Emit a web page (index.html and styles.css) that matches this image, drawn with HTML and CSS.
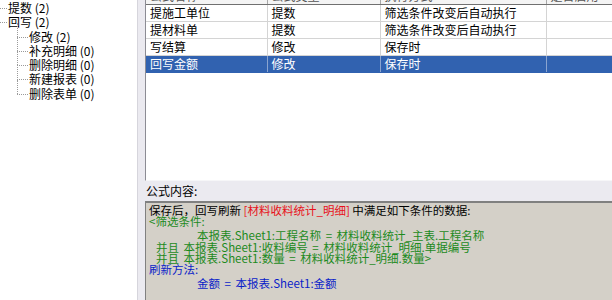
FILE: index.html
```html
<!DOCTYPE html>
<html lang="zh-CN">
<head>
  <meta charset="UTF-8">
  <title>回写公式</title>
  <link rel="stylesheet" href="styles.css">
</head>
<body>
  <div class="tree">
    <div class="node top">提数 (2)</div>
    <div class="node top">回写 (2)</div>
    <div class="children">
      <div class="node child">修改 (2)</div>
      <div class="node child">补充明细 (0)</div>
      <div class="node child">删除明细 (0)</div>
      <div class="node child">新建报表 (0)</div>
      <div class="node child last">删除表单 (0)</div>
    </div>
  </div>

  <div class="splitter"></div>

  <div class="main">
    <div class="list">
      <table class="grid">
        <colgroup>
          <col class="c1"><col class="c2"><col class="c3"><col class="c4">
        </colgroup>
        <thead>
          <tr><th>公式名称</th><th>公式类型</th><th>执行方式</th><th>是否启用</th></tr>
        </thead>
        <tbody>
          <tr><td>提施工单位</td><td>提数</td><td>筛选条件改变后自动执行</td><td></td></tr>
          <tr><td>提材料单</td><td>提数</td><td>筛选条件改变后自动执行</td><td></td></tr>
          <tr><td>写结算</td><td>修改</td><td>保存时</td><td></td></tr>
          <tr class="selected"><td>回写金额</td><td>修改</td><td>保存时</td><td></td></tr>
        </tbody>
      </table>
    </div>

    <div class="label">公式内容:</div>

    <div class="formula">
      <div class="line">保存后，回写刷新 <span class="red">[材料收料统计_明细]</span> 中满足如下条件的数据:</div>
      <div class="line green">&lt;筛选条件:</div>
      <div class="line green indent gap">本报表.Sheet1:工程名称 = 材料收料统计_主表.工程名称</div>
      <div class="line green sub">并且 本报表.Sheet1:收料编号 = 材料收料统计_明细.单据编号</div>
      <div class="line green sub">并且 本报表.Sheet1:数量 = 材料收料统计_明细.数量&gt;</div>
      <div class="line blue">刷新方法:</div>
      <div class="line blue indent gap">金额 = 本报表.Sheet1:金额</div>
    </div>
  </div>
</body>
</html>
```

FILE: styles.css
```css
html, body { margin: 0; padding: 0; }
body { width: 612px; height: 300px; overflow: hidden; display: flex; font-family: "Noto Sans CJK SC", sans-serif; font-size: 12px; color: #000; background: #fff; }

/* tree on the left */
.tree { width: 137px; flex: none; background: #fff; padding-top: 1px; }
.node { position: relative; height: 14.3px; line-height: 14.3px; white-space: nowrap; }
.node.top { padding-left: 8px; }
.node.top::before { content: ""; position: absolute; left: 0; top: 7px; width: 7px; border-top: 1px dotted #9a9a9a; }
.children { padding-left: 29px; }
.node.child::before { content: ""; position: absolute; left: -12px; top: 7px; width: 11px; border-top: 1px dotted #9a9a9a; }
.node.child::after { content: ""; position: absolute; left: -12px; top: -7px; height: 14.3px; border-left: 1px dotted #9a9a9a; }

.splitter { width: 7px; flex: none; background: #ebeaf0; border-left: 1px solid #d6d5dc; }

/* right side */
.main { flex: 1; display: flex; flex-direction: column; min-width: 0; background: #ebeaf0; }
.list { height: 180px; flex: none; overflow: hidden; background: #fff; border-left: 1px solid #8c8c94; border-bottom: 1px solid #f6f6f8; }
.grid { border-collapse: collapse; table-layout: fixed; width: 520px; margin-top: -13px; }
.grid col.c1 { width: 121px; }
.grid col.c2 { width: 113px; }
.grid col.c3 { width: 166px; }
.grid col.c4 { width: 120px; }
.grid th { height: 16px; font-weight: normal; text-align: left; padding: 0 4px; color: #555; background: #f4f4f4; border-right: 1px solid #a8a8a8; border-bottom: 1px solid #707070; white-space: nowrap; overflow: hidden; }
.grid td { height: 16px; line-height: 16px; padding: 0 4px; border-right: 1px solid #d4d4d4; border-bottom: 1px solid #d4d4d4; white-space: nowrap; overflow: hidden; }
.grid tr.selected td { background: #3162b0; color: #fff; border-right-color: #8aa4d0; border-bottom-color: #3162b0; }

.label { height: 20px; line-height: 20px; padding-left: 1px; flex: none; }

.formula { flex: 1; background: #d4d0c8; border-top: 2px solid #808080; border-left: 1px solid #808080; padding: 2px 0 0 3px; font-size: 11.5px; }
.formula .line { height: 11.2px; line-height: 11.2px; white-space: nowrap; }
.formula .red { color: #e8101a; }
.formula .green { color: #1c8a1c; }
.formula .blue { color: #0a1ec8; }
.formula .indent { padding-left: 48px; word-spacing: 2px; }
.formula .sub { padding-left: 7px; word-spacing: 2px; }
.formula .gap { margin-top: 3px; }
```
